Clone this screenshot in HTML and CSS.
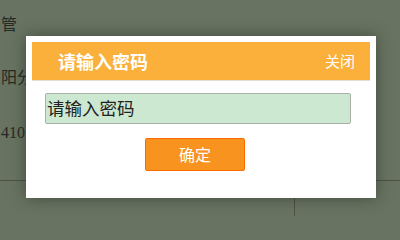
FILE: index.html
```html
<!DOCTYPE html>
<html>
<head>
<meta charset="utf-8">
<link rel="stylesheet" href="styles.css">
</head>
<body>
<div class="page">
  <div class="side">
    <div class="row r1">管</div>
    <div class="row r2">阳分</div>
    <div class="row r3">410</div>
  </div>
  <div class="bottom">
    <div class="cell"></div>
  </div>
</div>
<div class="mask"></div>
<div class="dialog">
  <div class="head">
    <span class="title">请输入密码</span>
    <span class="close">关闭</span>
  </div>
  <div class="body">
    <div class="input">请输入密码</div>
    <div class="btn">确定</div>
  </div>
</div>
</body>
</html>
```
FILE: styles.css
```css
html, body {
  margin: 0;
  padding: 0;
}
html {
  background: #687361;
}
body {
  width: 400px;
  height: 216px;
  overflow: hidden;
  background: #687361;
  font-family: "Liberation Serif", "Noto Sans CJK SC", serif;
  position: relative;
}
.page {
  height: 216px;
  display: flex;
  flex-direction: column;
}
.side {
  padding-left: 1px;
  color: #262a24;
  font-size: 16px;
  height: 181px;
  border-bottom: 1px solid #4a5147;
  box-sizing: border-box;
}
.row {
  line-height: 20px;
}
.r1 { margin-top: 15px; }
.r2 { margin-top: 33px; }
.r3 { margin-top: 35px; }
.bottom {
  flex: 1;
  display: flex;
  justify-content: flex-end;
}
.cell {
  width: 105px;
  border-left: 1px solid #4a5147;
}
.mask {
  position: absolute;
  inset: 0;
}
.dialog {
  position: absolute;
  left: 26px;
  top: 36px;
  width: 350px;
  height: 162px;
  box-sizing: border-box;
  padding: 6px;
  background: #fff;
  box-shadow: 0 0 14px rgba(40, 48, 36, 0.6);
}
.head {
  height: 38px;
  background: #fbb03b;
  border-bottom: 1px solid #e2dcd2;
  display: flex;
  align-items: center;
  justify-content: space-between;
  padding: 0 15px 0 26px;
  color: #fff;
  font-family: "Noto Sans CJK SC", sans-serif;
}
.title {
  font-size: 18px;
  font-weight: bold;
  line-height: 20px;
  margin-top: -1px;
}
.close {
  font-size: 15px;
  line-height: 20px;
  margin-top: -1px;
}
.body {
  padding: 12px 0 0 13px;
}
.input {
  width: 306px;
  height: 31px;
  box-sizing: border-box;
  border: 1px solid #a9b0a8;
  border-radius: 2px;
  background: #cde8d0;
  font-family: "Noto Sans CJK SC", sans-serif;
  font-size: 17.5px;
  line-height: 28px;
  color: #222;
  padding-left: 1px;
}
.btn {
  margin: 14px 0 0 100px;
  width: 100px;
  height: 33px;
  box-sizing: border-box;
  background: #f7931e;
  border: 1px solid #ff6a00;
  border-radius: 2px;
  color: #fff;
  font-family: "Noto Sans CJK SC", sans-serif;
  font-size: 16px;
  line-height: 30px;
  text-align: center;
}
```
